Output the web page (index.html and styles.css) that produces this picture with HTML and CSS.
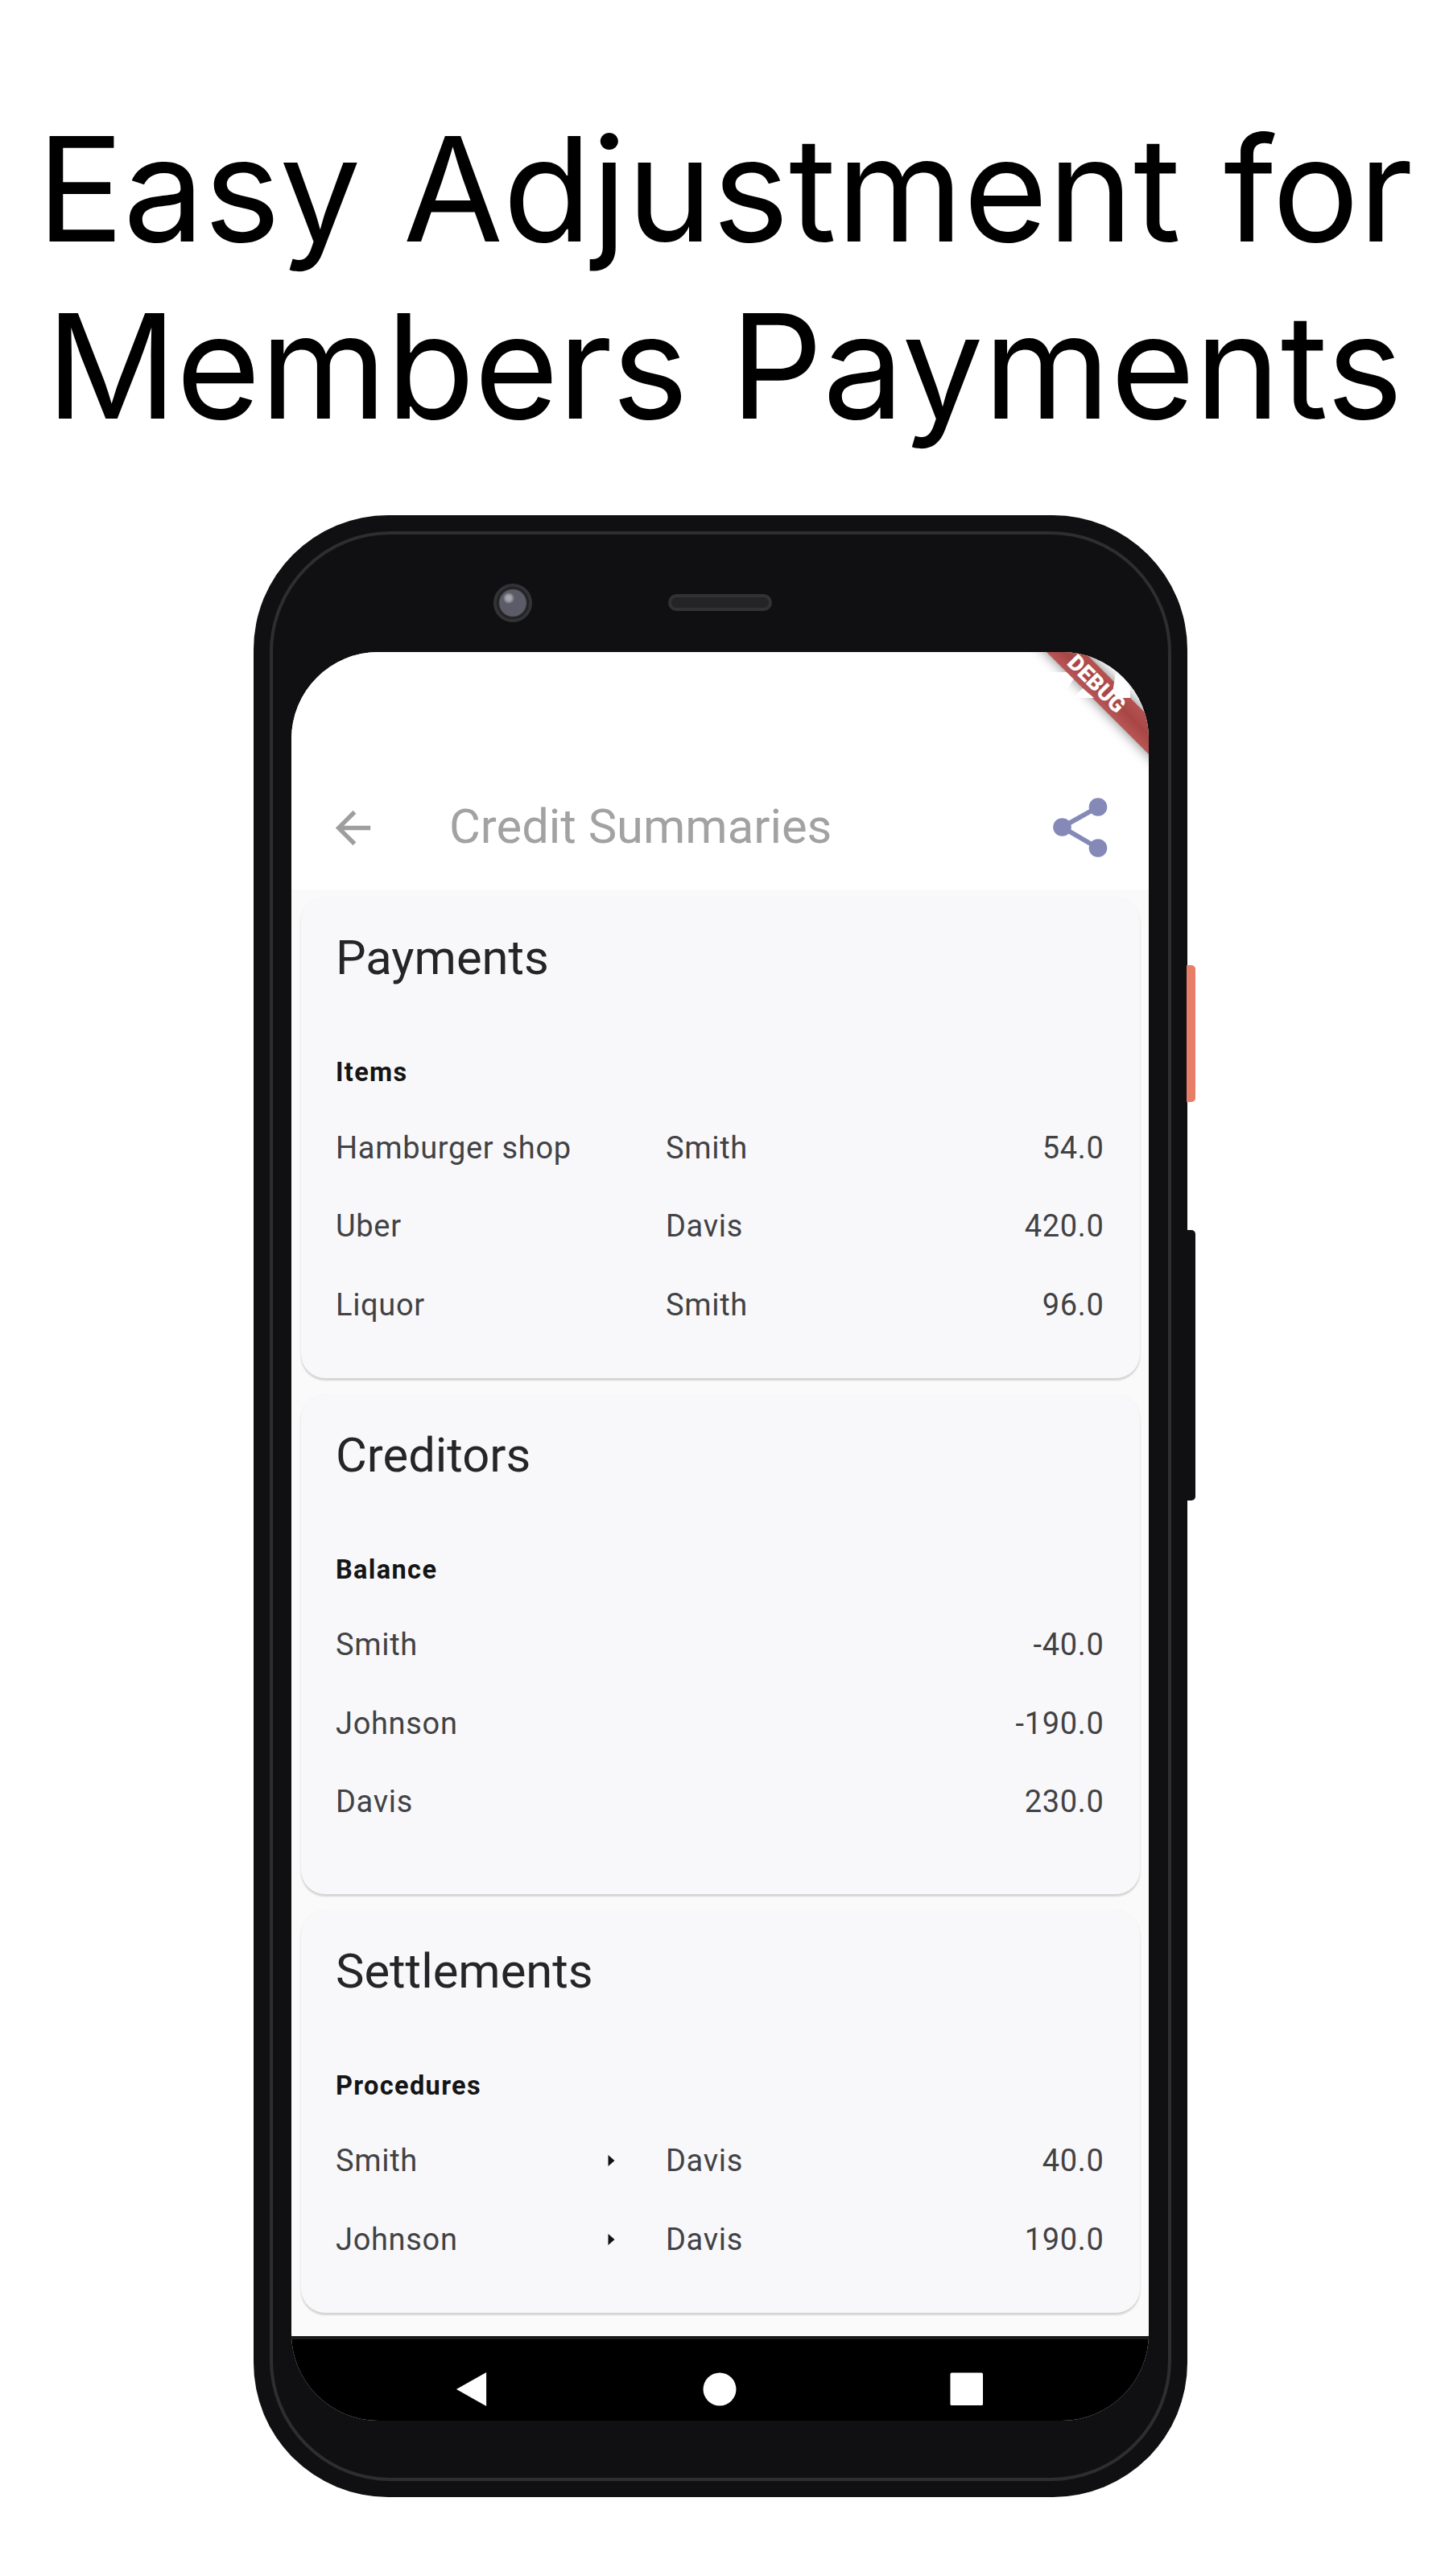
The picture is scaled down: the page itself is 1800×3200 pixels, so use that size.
FILE: index.html
```html
<!DOCTYPE html>
<html lang="en">
<head>
<meta charset="utf-8">
<title>Credit Summaries</title>
<link rel="stylesheet" href="styles.css">
</head>
<body>
<h1 class="headline"><span class="tight">Easy</span> <span>Adjustment</span> <span class="tight">for</span><br><span class="tight">Members</span> <span>Payments</span></h1>
<div class="phone">
  <span class="key key-power"></span>
  <span class="key key-volume"></span>
  <div class="rim"></div>
  <div class="bezel">
    <span class="camera"></span>
    <span class="speaker"></span>
  </div>
  <div class="screen">
    <svg class="debug" viewBox="0 0 165 165">
      <defs>
        <filter id="soft" x="-50%" y="-50%" width="200%" height="200%"><feGaussianBlur stdDeviation="8"/></filter>
        <linearGradient id="band" gradientUnits="userSpaceOnUse" x1="101" y1="63" x2="124" y2="40">
          <stop offset="0" stop-color="#b95757"/><stop offset=".5" stop-color="#a84646"/><stop offset="1" stop-color="#b55151"/>
        </linearGradient>
      </defs>
      <path d="M25-13 178 140V92L73-13z" fill="#000" opacity=".5" filter="url(#soft)"/>
      <path d="M36 25H64L72 33 64 45z" fill="#fff"/>
      <path d="M25-13 178 140V93L72-13z" fill="url(#band)"/>
      <path d="M71 57 83 45 97 57zM124 26 134 33 142 45V57H126L120 50z" fill="#fff"/>
      <text class="debug-text" transform="translate(93.500 46) rotate(45)" text-anchor="middle">DEBUG</text>
    </svg>
    <header class="appbar">
      <svg class="back" viewBox="0 0 24 24"><path d="M20 11H7.83l5.59-5.59L12 4l-8 8 8 8 1.41-1.41L7.83 13H20z"/></svg>
      <span class="appbar-title">Credit Summaries</span>
      <svg class="share" viewBox="0 0 68 76"><path d="M56 12.500 11.500 37.500 56 63.500"/><circle cx="56" cy="12.500" r="11.300"/><circle cx="11.500" cy="37.500" r="11.300"/><circle cx="56" cy="63.500" r="11.300"/></svg>
    </header>
    <main class="cards">
      <section class="card">
        <h2>Payments</h2>
        <h3>Items</h3>
        <div class="row"><span>Hamburger shop</span><span></span><span>Smith</span><span class="amount">54.0</span></div>
        <div class="row"><span>Uber</span><span></span><span>Davis</span><span class="amount">420.0</span></div>
        <div class="row"><span>Liquor</span><span></span><span>Smith</span><span class="amount">96.0</span></div>
      </section>
      <section class="card card-tall">
        <h2>Creditors</h2>
        <h3>Balance</h3>
        <div class="row"><span>Smith</span><span></span><span></span><span class="amount">-40.0</span></div>
        <div class="row"><span>Johnson</span><span></span><span></span><span class="amount">-190.0</span></div>
        <div class="row"><span>Davis</span><span></span><span></span><span class="amount">230.0</span></div>
      </section>
      <section class="card">
        <h2>Settlements</h2>
        <h3>Procedures</h3>
        <div class="row"><span>Smith</span><svg class="arrow" viewBox="0 0 8 14"><path d="M0 0 8 7 0 14z"/></svg><span>Davis</span><span class="amount">40.0</span></div>
        <div class="row"><span>Johnson</span><svg class="arrow" viewBox="0 0 8 14"><path d="M0 0 8 7 0 14z"/></svg><span>Davis</span><span class="amount">190.0</span></div>
      </section>
    </main>
    <nav class="navbar">
      <svg viewBox="0 0 40 44"><path d="M0 22 39 0V44z"/></svg>
      <svg viewBox="0 0 42 42"><circle cx="21" cy="21" r="20.500"/></svg>
      <svg viewBox="0 0 44 44"><rect x=".5" y=".5" width="42.500" height="42.500" rx="2"/></svg>
    </nav>
  </div>
</div>
</body>
</html>
```
FILE: styles.css
```css
* { box-sizing: border-box; }
body {
  margin: 0;
  width: 1800px;
  height: 3200px;
  overflow: hidden;
  background: #fff;
  font-family: Roboto, "Liberation Sans", sans-serif;
}
.headline {
  margin: 0;
  padding-top: 125px;
  height: 640px;
  font: 400 180px/220px Inter, sans-serif;
  word-spacing: 2.500px;
  color: #000;
  text-align: center;
  white-space: nowrap;
}
.tight { letter-spacing: -.9px; }
.phone {
  position: relative;
  width: 1159.500px;
  height: 2462px;
  margin-left: 315px;
  padding: 0 47px;
  border-radius: 167px;
  background: #101012;
}
.key { position: absolute; left: 1159px; width: 11px; border-radius: 0 5px 5px 0; }
.key-power { top: 559px; height: 170px; background: #e67e68; }
.key-volume { top: 888px; height: 336px; background: #101012; }
.rim {
  position: absolute;
  left: 20px;
  top: 20px;
  width: 1120px;
  height: 2422px;
  border: 4px solid #2e2e2f;
  border-radius: 150px;
}
.bezel { position: relative; height: 169.5px; }
.camera {
  position: absolute;
  left: 251px;
  top: 84.5px;
  width: 48px;
  height: 48px;
  border: 4px solid #333335;
  border-radius: 50%;
  background: radial-gradient(circle at 15px 14px, #a5a5ad 0 3px, #777782 6px, transparent 7px), radial-gradient(circle, #5c5c69 0 16px, #222224 18px);
}
.speaker {
  position: absolute;
  left: 468px;
  top: 98px;
  width: 129px;
  height: 21px;
  border: 4px solid #323233;
  border-radius: 11px;
  background: #242426;
}
.screen {
  position: relative;
  display: flex;
  flex-direction: column;
  width: 1065px;
  height: 2197.5px;
  border-radius: 108px;
  overflow: hidden;
  background: #fafafa;
}
.debug { position: absolute; right: 0; top: 0; width: 165px; height: 165px; }
.debug-text { font: 900 27.600px Roboto, sans-serif; fill: #fff; }
.appbar {
  display: flex;
  align-items: center;
  height: 295.5px;
  padding: 142px 51.500px 0 44px;
  background: #fff;
}
.back { width: 65px; height: 65px; fill: #9e9e9e; }
.appbar-title { margin: -2px 0 0 87px; font-size: 59.700px; line-height: 70px; color: #a2a2a2; white-space: nowrap; }
.share { width: 68px; height: 76px; margin-left: auto; fill: #8589b7; }
.share path { fill: none; stroke: #8589b7; stroke-width: 6; }
.cards { flex: 1; display: flex; flex-direction: column; gap: 21px; padding: 10px 11px 0 12px; }
.card {
  padding: 39px 44.500px 42px 43px;
  border-radius: 30px;
  background: #f8f8fb;
  box-shadow: 0 3px 2px rgba(0, 0, 0, .13), 0 1px 4px rgba(0, 0, 0, .06);
}
.card-tall { padding-bottom: 65.500px; }
.card h2 { margin: 0; font-size: 59.700px; font-weight: 400; line-height: 72px; color: #252527; }
.card h3 { margin: 86px 0 25px; font-size: 32.500px; font-weight: 700; line-height: 40px; letter-spacing: 1.350px; color: #151515; }
.row {
  display: grid;
  grid-template-columns: 338px 72px 1fr auto;
  align-items: center;
  height: 97.500px;
  font-size: 38px;
  letter-spacing: .68px;
  color: #424244;
  white-space: nowrap;
}
.arrow { width: 9px; height: 14px; fill: #111; }
.navbar {
  display: flex;
  align-items: center;
  justify-content: space-between;
  height: 105px;
  padding: 22px 205px 0 203px;
  border-top: 4px solid #1a1a1c;
  background: #000;
}
.navbar svg { width: 42px; height: 42px; fill: #fff; }
```
